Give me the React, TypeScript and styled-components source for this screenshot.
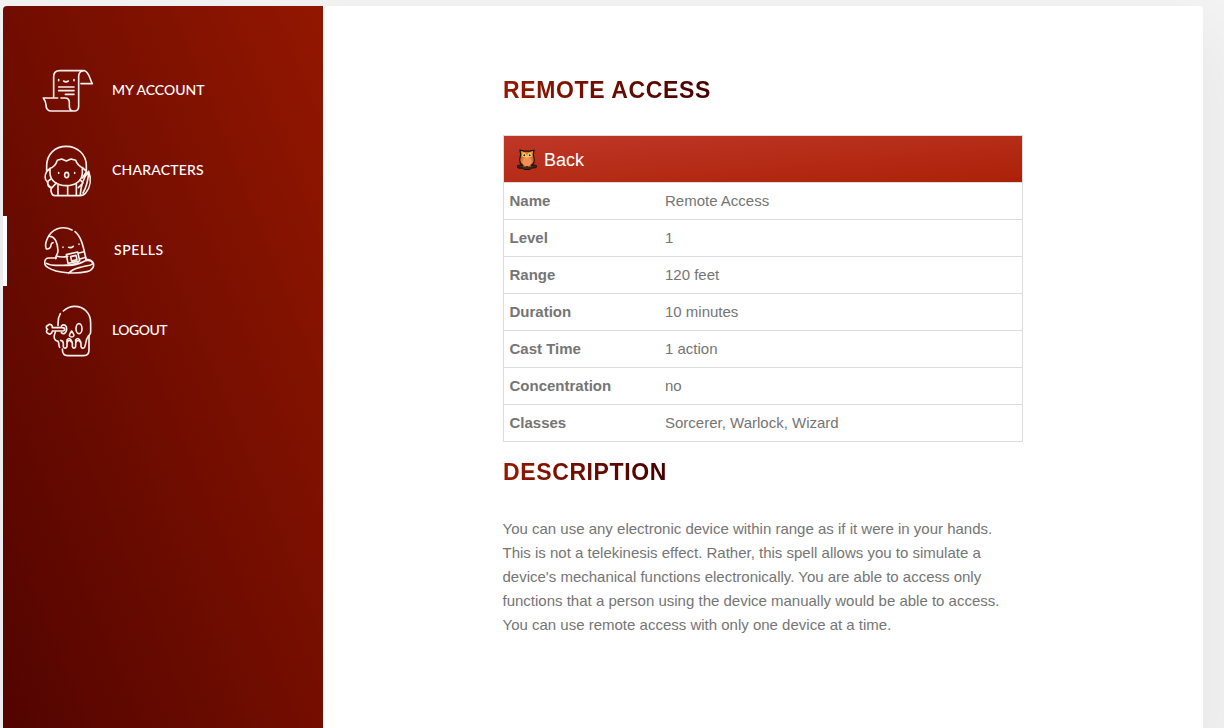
import React from "react";
import styled, { createGlobalStyle } from "styled-components";

const GlobalStyle = createGlobalStyle`
  * { box-sizing: border-box; }
  body {
    margin: 0;
    height: 728px;
    overflow: hidden;
    background: #f4f4f4;
    font-family: "Liberation Sans", Arial, sans-serif;
    font-size: 15px;
    line-height: 24px;
    color: #757575;
  }
`;

const Shell = styled.div`
  display: flex;
  width: 1200px;
  height: 722px;
  margin: 6px 0 0 3px;
  border-radius: 4px 4px 0 0;
  background: #fff;
  box-shadow: 0 40px 80px 20px rgba(0, 0, 0, 0.05);
`;

const Sidebar = styled.nav`
  display: flex;
  flex-direction: column;
  gap: 10px;
  width: 320px;
  padding-top: 50px;
  border-radius: 4px 0 0 0;
  background: linear-gradient(248deg, #931700, #520400);
`;

const NavItem = styled.a<{ $active?: boolean }>`
  display: flex;
  align-items: center;
  gap: 18px;
  height: 70px;
  padding: 0 0 2px ${(p) => (p.$active ? 35 : 39)}px;
  border-left: ${(p) => (p.$active ? "4px solid #fff" : "0")};
`;

const NavLabel = styled.span<{ $spacing: number; $indent?: number }>`
  margin-left: ${(p) => p.$indent ?? 0}px;
  font-family: Lato, "Open Sans", sans-serif;
  font-size: 14px;
  font-weight: 500;
  letter-spacing: ${(p) => p.$spacing}px;
  text-transform: uppercase;
  white-space: nowrap;
  color: #fff;
`;

const NavIcon = styled.svg`
  flex: none;
  width: 52px;
  height: 52px;
  overflow: visible;
  fill: none;
  stroke: #f9efec;
  stroke-width: 4.9;
  stroke-linecap: round;
  stroke-linejoin: round;
`;

const Content = styled.main`
  width: 520px;
  margin-left: 180px;
  padding-top: 64px;
`;

const Heading = styled.h2`
  width: fit-content;
  margin: 0;
  font-size: 23px;
  line-height: 40px;
  font-weight: 700;
  letter-spacing: 0.62px;
  text-transform: uppercase;
  color: transparent;
  background: linear-gradient(to right, #961900, #430000);
  background-clip: text;
  -webkit-background-clip: text;
`;

const Card = styled.section`
  margin: 25px 0 10px;
  border: 1px solid #dcdcdc;
`;

const BackBar = styled.a`
  display: flex;
  align-items: center;
  gap: 7px;
  height: 46px;
  padding: 1px 0 0 13px;
  font-size: 18px;
  color: #fff;
  background: linear-gradient(to bottom right, #bf3727, #ab2108);
`;

const Row = styled.div`
  display: grid;
  grid-template-columns: 155.5px 1fr;
  height: 37px;
  padding: 6px 6px 0 5.5px;
  border-top: 1px solid #dcdcdc;
`;

const Term = styled.strong`
  font-weight: 700;
`;

const Description = styled.p`
  margin: 25px 0 0 -0.5px;
`;

const OwlSvg = styled.svg`
  width: 20px;
  height: 21px;
`;

const ScrollIcon = () => (
  <NavIcon viewBox="36 12 156 156">
    <path d="M71 110V50q0-18 18-18h75c13 4 14 22 23 39h-34M146 112V48q1-14 13-15M146 103v35q0 15-13 15H65q-17 0-17-19-1-10-8-20h43M93 114h12q13 0 13 14v10q0 15 13 15" />
    <path d="M86 81h46M86 92h46M106 103h26M101 63q7 5 14 0M86 59v3M132 59v3" />
  </NavIcon>
);

const CharacterIcon = () => (
  <NavIcon viewBox="36 12 156 156">
    <path d="M50 95V78C50 41 76 19 109 19s60 24 60 58v18M50 95l10-10c10-2 18-12 22-24l13-4 14 6 14-6 14 4c4 12 12 19 22 23l10 10M60 86v13c0 22 21 38 49 38s48-16 48-38V84" />
    <path d="M50 95c-6 10-7 24 2 30l11-8M52 125c1 9 6 16 14 18l13-14M54 126q-3 14 8 17M65 143c-4 5-2 13 0 16q2 8 10 8h74q12 0 18-8c14-17 18-42 9-65q-22 28-25 69M113 139v28M84 136v31M139 132v35M150 119l9 10-14 14M169 96l-12 18M176 98c-2 24-7 44-17 61" />
    <ellipse cx="110" cy="105" rx="6" ry="8" />
    <path d="M86 98v2M134 98v2" />
  </NavIcon>
);

const HatIcon = () => (
  <NavIcon viewBox="6 6 156 156">
    <path d="M96 24C66 8 34 22 22 50c-6 12-6 24-3 31 8 1 14-4 14-12q1-6 6-7M29 43c16 0 24 20 25 43 0 10-7 14-7 24M105 29c20 16 25 46 33 82" />
    <path d="M51 103q15 4 32 0M49 108H26c-14 0-16 21-3 28 30 19 86 20 118 13 18-4 24-19 17-29-5-6-13-8-20-8M20 124q10 6 28 6h22M82 130c24 2 38-6 54-14 12-2 20 1 22 8M70 130c18 0 32-3 44-8M86 154c12-15 28-16 42-20 12-4 22-2 29-8" />
    <path d="M79 98l34-8 6 27-35 7zM92 104l16-4 3 13-16 4zM117 93l15-4M120 111l17-5" />
    <path d="M69 75v1M117 66v1M86 76q7 3 14-3" />
  </NavIcon>
);

const SkullIcon = () => (
  <NavIcon viewBox="6 246 156 156">
    <path d="M70 267c10-9 21-14 34-14 28 0 48 21 48 49v28c0 10-6 9-9 16-6 6-4 17-9 29-3 6-10 4-11-2v-9c-1-12-15-12-16 0v9c-1 7-9 7-10 0v-9c-1-12-15-12-16 0v9c-1 7-9 7-11 1v-9q0-9-8-10" />
    <path d="M61 275c-9 15-6 24-7 36M46 330c-7 16-3 26 8 28 4 5 1 12 5 18M67 381c0 14 4 20 16 20h48q16 0 16-17v-41M81 359v-5q6-9 12 0v5M107 359v-5q6-9 12 0v5" />
    <path d="M64 317H37c1-10-11-13-14-6-6 1-5 9 0 11-5 3-5 11 1 12 4 5 13 0 13-7h31M64 312c8-8 17-1 16 10s-9 17-16 10M66 317q8 0 8 5t-7 5" />
    <ellipse cx="117" cy="320" rx="9" ry="15" />
    <path d="M95 327c-5 8-9 11-6 15 2 4 10 4 12 0 3-4-1-7-6-15z" />
  </NavIcon>
);

const Owl = () => (
  <OwlSvg viewBox="0 0 60 62">
    <path d="M1 53q-1-5 6-5h46q7 0 6 5-1 4-8 3l-8 1-4 4H21l-4-4-8 0Q2 58 1 53z" fill="#46251f" stroke="#160d0b" strokeWidth="3" />
    <path d="M9 3l12 3h18l12-3-2 13 3 16c0 12-7 19-22 19S8 44 8 32l3-16z" fill="#d9741f" stroke="#17100c" strokeWidth="3.5" />
    <path d="M12 6l11 4 7 7 7-7 11-4-4 11-14 10-14-10z" fill="#efa02c" />
    <ellipse cx="30" cy="37" rx="14" ry="14" fill="#f58d5a" />
    <circle cx="22" cy="18" r="6" fill="#ffe2a0" />
    <circle cx="38" cy="18" r="6" fill="#ffe2a0" />
    <circle cx="22" cy="18" r="3" fill="#241611" />
    <circle cx="38" cy="18" r="3" fill="#241611" />
    <path d="M27 21h6l-3 7z" fill="#ffd04c" />
    <path d="M19 50h8M33 50h8" stroke="#ef9b26" strokeWidth="4" />
  </OwlSvg>
);

const navItems = [
  { label: "My Account", icon: ScrollIcon, spacing: 0 },
  { label: "Characters", icon: CharacterIcon, spacing: 0.2 },
  { label: "Spells", icon: HatIcon, spacing: 0.6, active: true, indent: 2 },
  { label: "Logout", icon: SkullIcon, spacing: -0.5 },
];

const details: [string, string][] = [
  ["Name", "Remote Access"],
  ["Level", "1"],
  ["Range", "120 feet"],
  ["Duration", "10 minutes"],
  ["Cast Time", "1 action"],
  ["Concentration", "no"],
  ["Classes", "Sorcerer, Warlock, Wizard"],
];

export default function App() {
  return (
    <>
      <GlobalStyle />
      <Shell>
        <Sidebar>
          {navItems.map(({ label, icon: Icon, spacing, active, indent }) => (
            <NavItem key={label} $active={active}>
              <Icon />
              <NavLabel $spacing={spacing} $indent={indent}>{label}</NavLabel>
            </NavItem>
          ))}
        </Sidebar>
        <Content>
          <Heading>Remote Access</Heading>
          <Card>
            <BackBar>
              <Owl />
              Back
            </BackBar>
            {details.map(([term, value]) => (
              <Row key={term}>
                <Term>{term}</Term>
                <span>{value}</span>
              </Row>
            ))}
          </Card>
          <Heading>Description</Heading>
          <Description>
            You can use any electronic device within range as if it were in your hands. This is not a telekinesis effect.
            Rather, this spell allows you to simulate a device's mechanical functions electronically. You are able to
            access only functions that a person using the device manually would be able to access. You can use remote
            access with only one device at a time.
          </Description>
        </Content>
      </Shell>
    </>
  );
}
